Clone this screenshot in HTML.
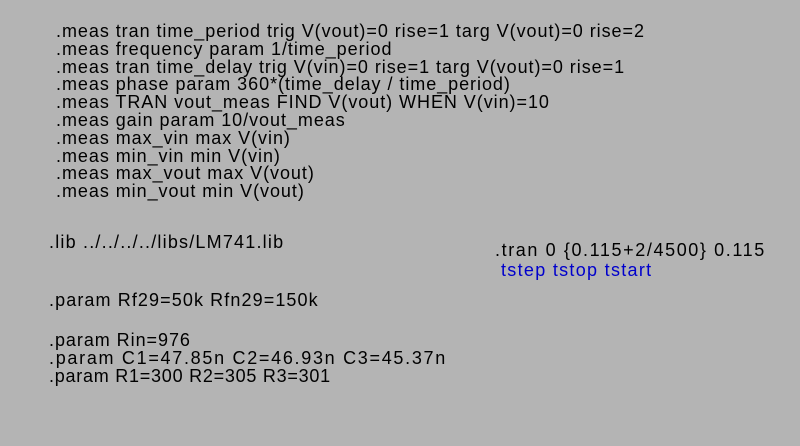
<!DOCTYPE html>
<html><head><style>
body{margin:0;width:800px;height:446px;background:#b4b4b4;overflow:hidden;position:relative;font-family:"Liberation Sans",sans-serif;font-size:18px;letter-spacing:0.95px;color:#000}
.t{position:absolute;white-space:pre;line-height:17.8px}
</style></head><body>
<div class="t" style="left:56px;top:23px">.meas tran time_period trig V(vout)=0 rise=1 targ V(vout)=0 rise=2
.meas frequency param 1/time_period
.meas tran time_delay trig V(vin)=0 rise=1 targ V(vout)=0 rise=1
.meas phase param 360*(time_delay / time_period)
.meas TRAN vout_meas FIND V(vout) WHEN V(vin)=10
.meas gain param 10/vout_meas
.meas max_vin max V(vin)
.meas min_vin min V(vin)
.meas max_vout max V(vout)
.meas min_vout min V(vout)</div>
<div class="t" style="left:49px;top:234px;letter-spacing:1.2px">.lib ../../../../libs/LM741.lib</div>
<div class="t" style="left:495px;top:242px;letter-spacing:1.6px">.tran 0 {0.115+2/4500} 0.115</div>
<div class="t" style="left:501px;top:262px;color:#0000cc;letter-spacing:1.3px">tstep tstop tstart</div>
<div class="t" style="left:49px;top:292px;letter-spacing:1.1px">.param Rf29=50k Rfn29=150k</div>
<div class="t" style="left:49px;top:332px">.param Rin=976</div>
<div class="t" style="left:49px;top:349.8px;letter-spacing:1.7px">.param C1=47.85n C2=46.93n C3=45.37n</div>
<div class="t" style="left:49px;top:367.6px;letter-spacing:0.75px">.param R1=300 R2=305 R3=301</div>
</body></html>
